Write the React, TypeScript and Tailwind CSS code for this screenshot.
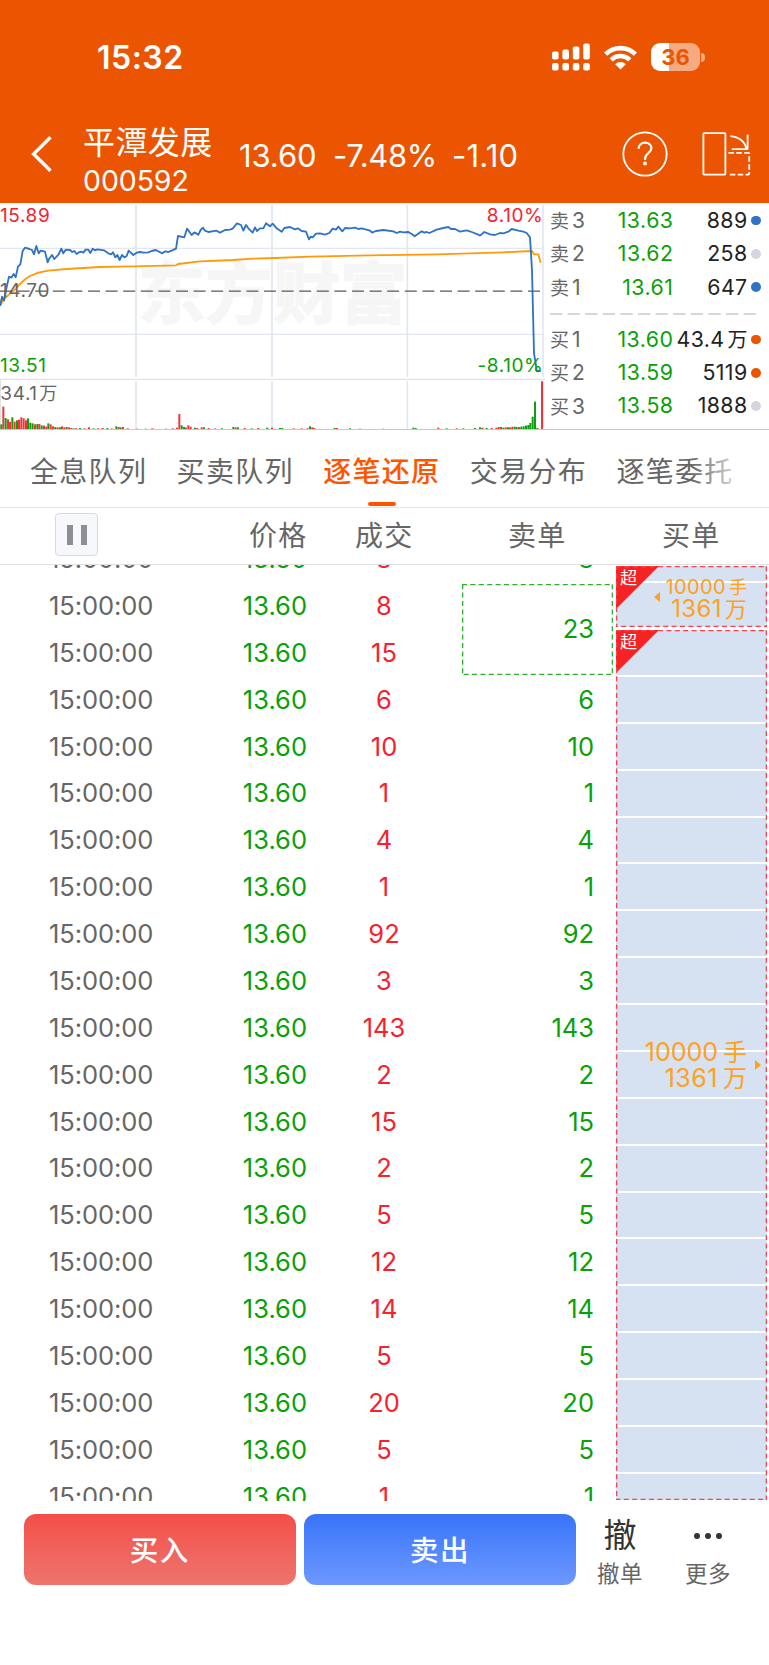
import React from 'react'

interface Quote {
  label: string
  price: string
  volume: string
  unit?: string
  dot: string
}

interface Trade {
  volume: string
  // 卖单数量，合并单元格的后续行为空
  sell?: string
  span?: number
}

const ASKS: Quote[] = [
  { label: '卖3', price: '13.63', volume: '889', dot: 'bg-[#2f73c4]' },
  { label: '卖2', price: '13.62', volume: '258', dot: 'bg-[#d3d6de]' },
  { label: '卖1', price: '13.61', volume: '647', dot: 'bg-[#2f73c4]' }
]

const BIDS: Quote[] = [
  { label: '买1', price: '13.60', volume: '43.4', unit: '万', dot: 'bg-[#eb5502]' },
  { label: '买2', price: '13.59', volume: '5119', dot: 'bg-[#eb5502]' },
  { label: '买3', price: '13.58', volume: '1888', dot: 'bg-[#d3d6de]' }
]

const TABS = ['全息队列', '买卖队列', '逐笔还原', '交易分布', '逐笔委托']

const TRADES: Trade[] = [
  { volume: '8', sell: '8' },
  { volume: '8', sell: '23', span: 2 },
  { volume: '15' },
  ...['6', '10', '1', '4', '1', '92', '3', '143', '2', '15', '2', '5', '12', '14', '5', '20', '5', '1'].map(
    (volume) => ({ volume, sell: volume })
  )
]

// 分时图坐标单位为 1/3 像素
const PRICE_LINE =
  '0,318 6,290 12,302 18,270 27,230 34,233 41,222 47,232 54,200 61,193 68,153 75,143 88,147 96,150 102,163 109,138 116,160 122,152 135,155 143,187 148,175 156,165 163,177 176,163 184,146 190,160 197,149 210,150 217,156 223,153 230,162 237,157 243,155 250,158 257,149 265,149 271,159 278,146 285,151 292,148 312,151 325,160 333,163 339,157 346,172 352,165 359,180 366,165 373,172 380,168 386,152 400,165 410,158 420,156 430,158 445,157 455,153 467,150 487,160 495,154 505,156 515,152 528,146 534,108 553,112 561,86 575,105 583,97 595,104 602,90 609,83 615,92 625,96 650,92 660,98 675,90 690,89 698,86 711,70 723,75 730,92 738,75 745,85 758,98 765,82 771,93 780,85 790,85 798,70 810,79 818,71 830,85 845,95 853,84 870,81 885,88 893,85 905,93 918,95 927,118 932,110 938,112 948,101 960,100 975,104 988,99 998,86 1008,89 1015,80 1027,94 1035,84 1050,85 1065,83 1075,87 1085,85 1110,92 1116,98 1128,93 1150,90 1180,94 1190,99 1200,95 1210,97 1225,96 1235,102 1244,109 1265,94 1273,98 1280,96 1288,99 1310,89 1330,84 1345,81 1353,87 1365,87 1380,95 1400,91 1415,96 1435,104 1440,107 1453,96 1470,103 1485,105 1500,99 1510,100 1525,95 1535,87 1555,92 1570,95 1580,99 1590,112 1596,210 1602,460 1607,490 1610,513 1622,513'
const AVG_LINE =
  '2,315 10,298 20,290 45,268 60,252 75,238 90,228 115,218 145,212 200,207 300,201 400,199 528,196 534,192 600,184 700,180 760,176 825,174 930,170 1110,166 1310,163 1510,157 1596,153 1602,163 1615,163 1622,188'

// [x, 高度, 是否上涨]
const VOLUME_BARS: [number, number, boolean][] = [
  [4, 15, false], [10, 68, true], [17, 34, false], [24, 30, true], [30, 22, true], [37, 36, false], [44, 23, true],
  [51, 27, false], [57, 29, true], [64, 36, true], [71, 33, true], [78, 27, true], [84, 33, false], [91, 20, false],
  [98, 18, false], [105, 15, true], [112, 16, false], [118, 16, true], [125, 12, false], [132, 11, true],
  [139, 8, true], [145, 18, false], [152, 15, true], [159, 9, true], [166, 7, false], [173, 6, true], [180, 6, false],
  [186, 9, true], [193, 6, true], [200, 7, false], [207, 6, true], [214, 4, true], [221, 3, false], [228, 3, true],
  [240, 4, false], [254, 3, true], [267, 6, true], [281, 3, false], [294, 3, true], [308, 4, true], [322, 4, false],
  [335, 3, true], [349, 9, false], [356, 7, true], [362, 6, false], [369, 7, true], [383, 3, true], [410, 2, true],
  [437, 2, false], [457, 3, true], [498, 2, true], [518, 3, true], [531, 5, true], [538, 46, true], [545, 12, false],
  [552, 7, false], [558, 5, true], [565, 12, true], [572, 8, true], [585, 5, false], [592, 4, true], [605, 6, true],
  [612, 6, false], [626, 4, true], [646, 3, true], [666, 3, false], [700, 7, false], [707, 6, true], [714, 6, false],
  [734, 4, true], [755, 3, false], [775, 4, true], [802, 5, false], [816, 5, true], [840, 4, false], [847, 4, false],
  [881, 3, true], [905, 3, true], [923, 3, true], [930, 9, false], [937, 6, true], [943, 4, true], [1004, 4, false],
  [1011, 4, true], [1050, 3, false], [1080, 2, true], [1150, 2, true], [1240, 5, false], [1247, 4, false],
  [1315, 5, true], [1340, 3, false], [1370, 3, true], [1390, 3, false], [1425, 4, false], [1440, 6, false],
  [1447, 5, true], [1460, 4, false], [1475, 4, true], [1489, 5, true], [1496, 7, true], [1503, 7, true],
  [1510, 5, false], [1517, 6, true], [1524, 6, false], [1530, 6, true], [1537, 8, true], [1544, 8, false],
  [1550, 7, false], [1557, 7, true], [1564, 8, false], [1571, 9, false], [1578, 11, false], [1585, 13, false],
  [1591, 19, false], [1598, 38, false], [1605, 83, false], [1612, 4, false], [1626, 144, true]
]

function StatusBar() {
  return (
    <div className="flex h-[114px] items-center justify-between pl-[97px] pr-[64px]">
      <span className="pt-[2px] text-[32px] font-semibold leading-none tracking-[0.5px]">15:32</span>
      <div className="flex items-center gap-[14px]">
        <svg width="38" height="28" viewBox="0 0 38 28" fill="currentColor">
          <rect x="0" y="8.5" width="6.6" height="8" rx="2" />
          <rect x="10.4" y="6.5" width="6.6" height="10" rx="2" />
          <rect x="20.8" y="3.5" width="6.6" height="13" rx="2" />
          <rect x="31.2" y="0.5" width="6.6" height="16" rx="2" />
          <rect x="0" y="20" width="6.6" height="7.6" rx="2" />
          <rect x="10.4" y="20" width="6.6" height="7.6" rx="2" />
          <rect x="20.8" y="20" width="6.6" height="7.6" rx="2" />
          <rect x="31.2" y="20" width="6.6" height="7.6" rx="2" />
        </svg>
        <svg width="33" height="25" viewBox="0 0 33 25" fill="none" stroke="currentColor" strokeWidth="4.6">
          <path d="M1.6 9.1C10 1.1 23 1.1 31.4 9.1" />
          <path d="M7.2 14.8C12.4 9.8 20.6 9.8 25.8 14.8" />
          <path d="M11.2 19.2C14.2 16.2 18.8 16.2 21.8 19.2L16.5 24.6Z" fill="currentColor" stroke="none" />
        </svg>
        <div className="flex items-center gap-px">
          <div className="flex h-7 w-[49px] items-center justify-center rounded-[9px] bg-[linear-gradient(90deg,#fff_36%,#f5aa80_36%)] text-[22px] font-bold leading-none text-[#eb5502]">
            36
          </div>
          <div className="h-[9px] w-[4px] rounded-r-full bg-[#f5aa80]" />
        </div>
      </div>
    </div>
  )
}

function TitleBar() {
  return (
    <div className="flex h-[89px] items-center">
      <svg className="ml-[31px] mt-[-9px]" width="21" height="36" viewBox="0 0 21 36" fill="none" stroke="currentColor" strokeWidth="3.4">
        <path d="M19.5 1.2L2.6 18L19.5 34.8" />
      </svg>
      <div className="ml-[31px] w-[156px]">
        <div className="mt-[3px] h-[41px] whitespace-nowrap text-[32px] leading-[42px] tracking-[0.4px]">平潭发展</div>
        <div className="h-[36px] text-[28.5px] leading-[36px] tracking-[-0.1px]">000592</div>
      </div>
      <div className="mt-[-7px] flex items-center text-[31px] leading-none">
        <span className="w-[94px] tracking-[-0.1px]">13.60</span>
        <span className="w-[119px] tracking-[-0.3px]">-7.48%</span>
        <span className="w-[170px] tracking-[0.2px]">-1.10</span>
      </div>
      <svg className="mt-[-9px]" width="46" height="46" viewBox="0 0 46 46" fill="none" stroke="currentColor">
        <circle cx="23" cy="23" r="21.7" strokeWidth="1.8" />
        <path d="M16.6 17.8C16.6 13.8 19.4 11.6 23.1 11.6C26.8 11.6 29.4 14 29.4 17.2C29.4 22 23 22.2 23 28V29" strokeWidth="2.2" />
        <circle cx="23" cy="32.4" r="2" fill="currentColor" stroke="none" />
      </svg>
      <svg className="ml-[34px] mt-[-9px]" width="49" height="44" viewBox="0 0 49 44" fill="none" stroke="currentColor" strokeWidth="1.8">
        <rect x="1.4" y="1.2" width="22" height="41.4" rx="0.8" />
        <path d="M28.4 4.2C36.5 4.8 43.5 9.5 44.3 17.4M45.6 2.4V16.6Q45.6 17.2 44.8 17.2H29.8" />
        <path d="M26.4 20.8H46.2Q47.2 20.8 47.2 21.8V41.6Q47.2 42.6 46.2 42.6H26.4" strokeDasharray="5.5 2.4" />
      </svg>
    </div>
  )
}

function TimeChart() {
  return (
    <svg
      className="block h-[227px] w-[545px] shrink-0"
      viewBox="0 9 1635 681"
      fontFamily="Inter, 'Noto Sans CJK SC', sans-serif"
      fontSize="57"
    >
      <text x="414" y="355" fontSize="202" fontWeight="700" fill="#f6f6f6" stroke="#f6f6f6" strokeWidth="5" textLength="808">
        东方财富
      </text>
      <g stroke="#e2e7ef" strokeWidth="5" fill="none">
        <path d="M0 145H1629M0 403H1629" strokeWidth="3.5" />
        <path d="M408 15V531M816 15V531M1222 15V531M1629 15V531" />
        <path d="M408 543V686M816 543V686M1222 543V686M1629 543V686" />
      </g>
      <path d="M0 538H1635" stroke="#dcdde0" strokeWidth="3" />
      <path d="M1 538V690" stroke="#dcdde0" strokeWidth="3" />
      <polyline points={AVG_LINE} fill="none" stroke="#ff9a0c" strokeWidth="5.5" strokeLinejoin="round" />
      <polyline points={PRICE_LINE} fill="none" stroke="#2f73c4" strokeWidth="5.5" strokeLinejoin="round" />
      {VOLUME_BARS.map(([x, height, up]) => (
        <rect key={x} x={x - 3} y={688 - height} width="6" height={height} fill={up ? '#f0353a' : '#0ca00c'} />
      ))}
      <path d="M0 688.5H1635" stroke="#c9c9cc" strokeWidth="3" />
      <g letterSpacing="1.8">
        <text x="0" y="67" fill="#f5222d">15.89</text>
        <text x="0" y="291" fill="#666">14.70</text>
        <text x="0" y="516" fill="#09a009">13.51</text>
        <text x="1" y="600" fill="#666">
          34.1<tspan dx="5" fontSize="54">万</tspan>
        </text>
        <text x="1630" y="67" fill="#f5222d" textAnchor="end">8.10%</text>
        <text x="1630" y="516" fill="#09a009" textAnchor="end">-8.10%</text>
      </g>
      <path d="M0 273.5H1622" stroke="#5a5a5a" strokeWidth="4" strokeDasharray="36 16.8" />
    </svg>
  )
}

function QuoteRow({ quote }: { quote: Quote }) {
  return (
    <div className="flex h-[33.3px] items-center whitespace-nowrap text-[21.3px] leading-none">
      <span className="w-[40px] text-[21px] text-[#666]">
        <span className="mr-[3px] text-[19px]">{quote.label[0]}</span>
        {quote.label[1]}
      </span>
      <span className="w-[83.5px] text-right tracking-[0.5px] text-[#09a009]">{quote.price}</span>
      <span className="w-[74px] text-right tracking-[0.4px] text-[#222]">
        {quote.volume}
        {quote.unit && <span className="ml-[3px] text-[20px] tracking-normal">{quote.unit}</span>}
      </span>
      <span className={`ml-[3.5px] size-[9.5px] rounded-full ${quote.dot}`} />
    </div>
  )
}

function OrderBook() {
  return (
    <div className="flex-1 border-b border-[#c9c9cc] pl-[5px] pt-px">
      {ASKS.map((quote) => (
        <QuoteRow key={quote.label} quote={quote} />
      ))}
      <svg className="block" width="207" height="19" viewBox="0 0 207 19">
        <path d="M0 10H206" stroke="#d3d6de" strokeWidth="2" strokeDasharray="12.2 5.4" />
      </svg>
      {BIDS.map((quote) => (
        <QuoteRow key={quote.label} quote={quote} />
      ))}
    </div>
  )
}

function Tabs() {
  return (
    <div className="relative flex h-[78px] overflow-hidden border-b border-[#e6e6e6] pl-[30px] text-[28px] tracking-[1.3px] text-[#666]">
      {TABS.map((tab) => (
        <div key={tab} className="flex w-[146.6px] shrink-0 flex-col">
          <span
            className={
              tab === '逐笔还原'
                ? 'h-[72px] whitespace-nowrap font-medium leading-[84px] text-[#ff5500]'
                : 'h-[72px] whitespace-nowrap leading-[84px]'
            }
          >
            {tab}
          </span>
          {tab === '逐笔还原' && <span className="ml-[44.5px] h-[4px] w-[28px] rounded-full bg-[#ff5500]" />}
        </div>
      ))}
      {/* 右侧渐隐遮罩 */}
      <div className="absolute right-0 top-0 h-[76px] w-[78px] bg-linear-to-r from-transparent to-white to-75%" />
    </div>
  )
}

function TableHeader() {
  return (
    <div className="flex h-[57px] items-center border-b border-[#dddfe3] text-[28px] tracking-[1.3px] text-[#666]">
      <div className="ml-[55px] mt-[-3px] flex size-[43px] items-center justify-center gap-2 rounded-[4px] border border-[#d6dae1] bg-[#f7f8fb]">
        <span className="h-5 w-[6px] bg-[#8e8e95]" />
        <span className="h-5 w-[6px] bg-[#8e8e95]" />
      </div>
      <span className="ml-[151px] w-[106px]">价格</span>
      <span className="w-[153px]">成交</span>
      <span className="w-[154px]">卖单</span>
      <span>买单</span>
    </div>
  )
}

function DashedFrame({ color }: { color: string }) {
  return (
    <svg className="absolute inset-0 size-full" fill="none">
      <rect x="0" y="0" width="100%" height="100%" stroke={color} strokeWidth="2.6" strokeDasharray="5 3.4" />
    </svg>
  )
}

function SuperTag() {
  return (
    <div className="absolute left-0 top-0 size-[43px] bg-[#f52323] pl-[4px] pt-[4px] text-left text-[17px] leading-[17px] text-white [clip-path:polygon(0_0,100%_0,0_100%)]">
      超
    </div>
  )
}

function TradeList() {
  return (
    <div className="flex h-[936px] overflow-hidden text-[25.5px] leading-none">
      <div className="mt-[-29.6px] grid h-fit w-[616px] auto-rows-[46.88px] grid-cols-[49px_137px_121px_154px_155px] items-center">
        {TRADES.map((trade, i) => (
          <React.Fragment key={i}>
            <span className="col-start-2 whitespace-nowrap tracking-[-0.1px] text-[#666]">15:00:00</span>
            <span className="col-start-3 text-right text-[#09a009]">13.60</span>
            <span className="col-start-4 text-center text-[#f5222d]">{trade.volume}</span>
            {trade.span ? (
              <div className="relative col-start-5 row-span-2 ml-px mr-[3px] flex h-[91px] items-center justify-end overflow-hidden pr-[19px] text-[#09a009]">
                <DashedFrame color="#2fae2f" />
                {trade.sell}
              </div>
            ) : (
              trade.sell && <span className="col-start-5 pr-[22px] text-right text-[#09a009]">{trade.sell}</span>
            )}
          </React.Fragment>
        ))}
      </div>

      <div className="flex w-[151px] flex-col gap-[3px] pt-px text-right text-[#ffa01e]">
        <div className="relative h-[61px] overflow-hidden bg-[#d6e2f2] pr-[20px] pt-[11px]">
          <div className="absolute left-0 top-[15px] h-[2px] w-full bg-white" />
          <SuperTag />
          <DashedFrame color="#f5454d" />
          <div className="relative whitespace-nowrap text-[20px] leading-[21px] tracking-[0.4px]">
            10000<span className="ml-[3px] text-[18px] tracking-normal">手</span>
          </div>
          <div className="relative whitespace-nowrap text-[24px] leading-[22px] tracking-[0.4px]">
            1361<span className="ml-[3px] text-[22px] tracking-normal">万</span>
          </div>
          <div className="absolute left-[38px] top-[26px] h-[10px] w-[6px] bg-[#ffa01e] [clip-path:polygon(100%_0,100%_100%,0_50%)]" />
        </div>
        <div className="relative h-[870px] overflow-hidden bg-[repeating-linear-gradient(180deg,#d6e2f2_0,#d6e2f2_44.88px,#fff_44.88px,#fff_46.88px)] pr-[20px] pt-[409px]">
          <SuperTag />
          <DashedFrame color="#f5454d" />
          <div className="relative whitespace-nowrap text-[25px] leading-[26px]">
            10000<span className="ml-[5px] text-[24px]">手</span>
          </div>
          <div className="relative whitespace-nowrap text-[25px] leading-[25px] tracking-[0.5px]">
            1361<span className="ml-[5px] text-[24px] tracking-normal">万</span>
          </div>
          <div className="absolute right-[6px] top-[430px] h-[10px] w-[6px] bg-[#ffa01e] [clip-path:polygon(0_0,100%_50%,0_100%)]" />
        </div>
      </div>
    </div>
  )
}

function ActionBar() {
  return (
    <div className="flex h-[164px] items-start pl-[23.5px] pt-[13px]">
      <button className="h-[71px] w-[272.5px] rounded-xl bg-linear-to-b from-[#f54d48] to-[#ec746e] pt-[3px] text-[28.5px] font-medium tracking-[1.5px] text-white">
        买入
      </button>
      <button className="ml-2 h-[71px] w-[272px] rounded-xl bg-linear-to-b from-[#3874f8] to-[#6c98ff] pt-[3px] text-[28.5px] font-medium tracking-[1.5px] text-white">
        卖出
      </button>
      <div className="flex w-[88px] flex-col items-center text-[#333]">
        <span className="h-[44px] text-[33px] leading-[42px]">撤</span>
        <span className="text-[22.5px] leading-[32px] tracking-[0.5px] text-[#666]">撤单</span>
      </div>
      <div className="flex w-[88px] flex-col items-center">
        <div className="flex h-[44px] items-center gap-[5.5px]">
          <span className="size-[5.5px] rounded-full bg-[#333]" />
          <span className="size-[5.5px] rounded-full bg-[#333]" />
          <span className="size-[5.5px] rounded-full bg-[#333]" />
        </div>
        <span className="text-[22.5px] leading-[32px] tracking-[0.5px] text-[#666]">更多</span>
      </div>
    </div>
  )
}

export default function App() {
  return (
    <div className="h-[1665px] w-[769px] overflow-hidden bg-white font-[Inter,'Noto_Sans_CJK_SC',sans-serif]">
      <header className="h-[203px] bg-[#eb5502] text-white">
        <StatusBar />
        <TitleBar />
      </header>
      <section className="flex h-[227px]">
        <TimeChart />
        <OrderBook />
      </section>
      <Tabs />
      <TableHeader />
      <TradeList />
      <ActionBar />
    </div>
  )
}
